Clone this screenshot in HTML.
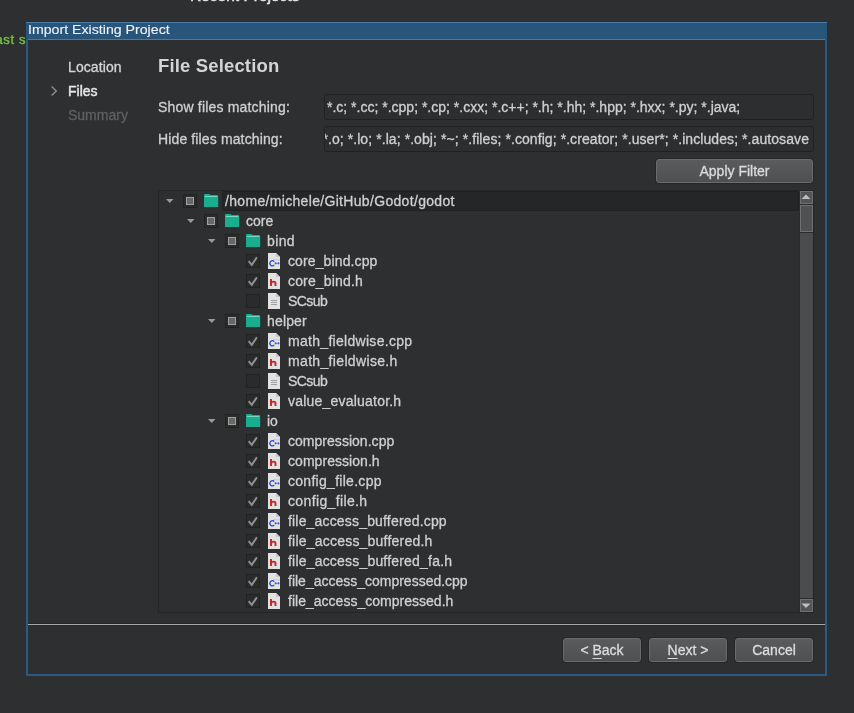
<!DOCTYPE html>
<html><head><meta charset="utf-8">
<style>
*{margin:0;padding:0;box-sizing:border-box}
html,body{width:854px;height:713px;overflow:hidden;background:#2e2f30;font-family:"Liberation Sans",sans-serif;font-size:14px;color:#d0d0d0;-webkit-font-smoothing:antialiased;-webkit-text-stroke:0.3px currentColor}
.a{position:absolute}
.t{position:absolute;white-space:nowrap;line-height:14px;height:14px}
#title{left:26px;top:22px;width:801px;height:18px;background:#28557b;border-top:1px solid #4b7aa3}
#tline{left:28px;top:39px;width:797px;height:1px;background:#4b7aa3}
#bl{left:26px;top:40px;width:2px;height:636px;background:#2a5a85}
#br{left:825px;top:40px;width:2px;height:636px;background:#2a5a85}
#bb{left:26px;top:674px;width:801px;height:2px;background:#2a5a85}
.le{position:absolute;left:324px;width:490px;height:26px;border:1px solid #202121;border-radius:2.5px;background:#2d2e2f;overflow:hidden}
.btn{position:absolute;height:24px;border:1px solid #6a6b6c;border-radius:3px;background:linear-gradient(#5a5b5c,#4f5051);box-shadow:0 0 0 1px #262728;text-align:center;color:#dcdcdc}
.btn span{position:absolute;left:0;right:0;top:4px;line-height:14px}
#tree{left:158px;top:190px;width:656px;height:423px;border:1px solid #242526;background:#2e2f30;overflow:hidden}
.row{position:absolute;left:0;height:20px;width:641px}
.row .txt{position:absolute;top:3px;line-height:14px;white-space:nowrap;color:#d0d0d0}
.tri{position:absolute;top:8px;width:8px;height:5px}
.cb{position:absolute;top:3px;width:14px;height:14px;background:#2a2b2b;border:1px solid #212222}
.cb.p::after{content:"";box-sizing:border-box;position:absolute;left:2px;top:2px;width:8px;height:8px;border:1px solid #a0a0a0;background:#686868}
.fold{position:absolute;top:3px;width:15px;height:14px}
.fic{position:absolute;top:2px;width:13px;height:16px}
#sb{left:641px;top:0;width:14px;height:421px}
u{text-underline-offset:2.5px;text-decoration-thickness:1px}
#wrap{position:absolute;left:0;top:0;width:854px;height:713px;will-change:transform}
</style></head><body><div id="wrap">

<div class="t" style="left:190px;top:-11px;font-size:15.5px;color:#e6e6e6;-webkit-text-stroke:0.5px #e6e6e6">Recent Projects</div>
<div class="t" style="right:828px;top:33px;font-size:13px;letter-spacing:0.6px;color:#76c043;-webkit-text-stroke:0.4px #76c043">ast s</div>

<div class="a" id="title"></div>
<div class="a" id="tline"></div>
<div class="t" style="left:28px;top:23px;font-size:12px;line-height:14px;color:#f2f2f2;-webkit-text-stroke:0.1px #f2f2f2;transform:scaleX(1.18);transform-origin:0 0">Import Existing Project</div>
<div class="a" id="bl"></div><div class="a" id="br"></div><div class="a" id="bb"></div>

<!-- left nav -->
<div class="t" style="left:68px;top:60px;color:#d6d6d6;letter-spacing:0.1px">Location</div>
<svg class="a" style="left:50px;top:85px" width="9" height="12"><path d="M1.6 1.6 L6.3 6.1 L1.6 10.6" stroke="#8c8c8c" stroke-width="1.4" fill="none"/></svg>
<div class="t" style="left:68px;top:84px;color:#e6e6e6;-webkit-text-stroke:0.45px #e6e6e6">Files</div>
<div class="t" style="left:68px;top:108px;color:#5f6061">Summary</div>

<div class="t" style="left:158px;top:57px;font-size:18.5px;line-height:18px;height:18px;font-weight:bold;color:#d4d4d4;-webkit-text-stroke:0;letter-spacing:0.15px">File Selection</div>

<div class="t" style="left:158px;top:100px;letter-spacing:0.18px">Show files matching:</div>
<div class="t" style="left:158px;top:132px;letter-spacing:0.13px">Hide files matching:</div>

<div class="le" style="top:94px"><div class="t" style="left:2px;top:5px">*.c; *.cc; *.cpp; *.cp; *.cxx; *.c++; *.h; *.hh; *.hpp; *.hxx; *.py; *.java;</div></div>
<div class="le" style="top:126px"><div class="t" style="right:4px;top:5px;letter-spacing:0.077px">*.o; *.lo; *.la; *.obj; *~; *.files; *.config; *.creator; *.user*; *.includes; *.autosave</div></div>

<div class="btn" style="left:656px;top:159px;width:157px"><span>Apply Filter</span></div>

<div class="a" id="tree">
<div class="row" style="top:0px"><svg class="tri" style="left:7px" width="8" height="5"><path d="M0 0 H7.5 L3.75 4 Z" fill="#9a9a9a"/></svg><div class="cb p" style="left:24px"></div><svg class="fold" style="left:45px" width="15" height="14" viewBox="0 0 15 14"><path d="M0 1 Q0 0 1 0 H5.5 L6.5 1 H13 Q14.2 1 14.2 2 V13 H0 Z" fill="#1aae90"/><rect x="1" y="2" width="12.2" height="1" fill="#7ad8c0"/></svg><div class="a" style="left:63px;top:0;width:577px;height:20px;background:#252627;border:1px solid #202122;border-radius:2px"></div><div class="txt" style="left:66px;letter-spacing:0.323px">/home/michele/GitHub/Godot/godot</div></div>
<div class="row" style="top:20px"><svg class="tri" style="left:28px" width="8" height="5"><path d="M0 0 H7.5 L3.75 4 Z" fill="#9a9a9a"/></svg><div class="cb p" style="left:45px"></div><svg class="fold" style="left:66px" width="15" height="14" viewBox="0 0 15 14"><path d="M0 1 Q0 0 1 0 H5.5 L6.5 1 H13 Q14.2 1 14.2 2 V13 H0 Z" fill="#1aae90"/><rect x="1" y="2" width="12.2" height="1" fill="#7ad8c0"/></svg><div class="txt" style="left:87px;letter-spacing:0.033px">core</div></div>
<div class="row" style="top:40px"><svg class="tri" style="left:49px" width="8" height="5"><path d="M0 0 H7.5 L3.75 4 Z" fill="#9a9a9a"/></svg><div class="cb p" style="left:66px"></div><svg class="fold" style="left:87px" width="15" height="14" viewBox="0 0 15 14"><path d="M0 1 Q0 0 1 0 H5.5 L6.5 1 H13 Q14.2 1 14.2 2 V13 H0 Z" fill="#1aae90"/><rect x="1" y="2" width="12.2" height="1" fill="#7ad8c0"/></svg><div class="txt" style="left:108px;letter-spacing:0.367px">bind</div></div>
<div class="row" style="top:60px"><div class="cb c" style="left:87px"><svg width="14" height="14" style="position:absolute;left:-1px;top:-1px"><path d="M2.6 7.2 L5.8 10.8 L10.9 3.2" stroke="#909090" stroke-width="2" fill="none"/></svg></div><svg class="fic" style="left:109px" width="13" height="16" viewBox="0 0 13 16"><path d="M0 0 H8 L12 4 V16 H0 Z" fill="#e2e2e2"/><path d="M8 0 V4 H12 Z" fill="#c8c8c8"/><rect x="5" y="6" width="7" height="1.5" fill="#cfcfcf"/><path d="M6.2 8.6 A2.4 2.6 0 1 0 6.2 12" stroke="#2f47dc" stroke-width="1.3" fill="none"/><path d="M6.5 10.3 H8.9 M7.7 9.1 V11.5 M9.2 10.3 H11.6 M10.4 9.1 V11.5" stroke="#2f47dc" stroke-width="0.8" fill="none"/></svg><div class="txt" style="left:129px;letter-spacing:0.117px">core_bind.cpp</div></div>
<div class="row" style="top:80px"><div class="cb c" style="left:87px"><svg width="14" height="14" style="position:absolute;left:-1px;top:-1px"><path d="M2.6 7.2 L5.8 10.8 L10.9 3.2" stroke="#909090" stroke-width="2" fill="none"/></svg></div><svg class="fic" style="left:109px" width="13" height="16" viewBox="0 0 13 16"><path d="M0 0 H8 L12 4 V16 H0 Z" fill="#e2e2e2"/><path d="M8 0 V4 H12 Z" fill="#c8c8c8"/><path d="M3 6 V13 M3 10.2 Q3.5 8.6 5.6 8.6 Q7.5 8.6 7.5 10.5 V13" stroke="#c82424" stroke-width="1.9" fill="none"/></svg><div class="txt" style="left:129px;letter-spacing:0.160px">core_bind.h</div></div>
<div class="row" style="top:100px"><div class="cb u" style="left:87px"></div><svg class="fic" style="left:109px" width="13" height="16" viewBox="0 0 13 16"><path d="M0 0 H8 L12 4 V16 H0 Z" fill="#e2e2e2"/><path d="M8 0 V4 H12 Z" fill="#c8c8c8"/><rect x="3" y="7" width="6" height="1" fill="#a0a0a0"/><rect x="3" y="9" width="6" height="1" fill="#a0a0a0"/><rect x="3" y="11" width="6" height="1" fill="#a0a0a0"/></svg><div class="txt" style="left:129px;letter-spacing:-0.550px">SCsub</div></div>
<div class="row" style="top:120px"><svg class="tri" style="left:49px" width="8" height="5"><path d="M0 0 H7.5 L3.75 4 Z" fill="#9a9a9a"/></svg><div class="cb p" style="left:66px"></div><svg class="fold" style="left:87px" width="15" height="14" viewBox="0 0 15 14"><path d="M0 1 Q0 0 1 0 H5.5 L6.5 1 H13 Q14.2 1 14.2 2 V13 H0 Z" fill="#1aae90"/><rect x="1" y="2" width="12.2" height="1" fill="#7ad8c0"/></svg><div class="txt" style="left:108px;letter-spacing:0.160px">helper</div></div>
<div class="row" style="top:140px"><div class="cb c" style="left:87px"><svg width="14" height="14" style="position:absolute;left:-1px;top:-1px"><path d="M2.6 7.2 L5.8 10.8 L10.9 3.2" stroke="#909090" stroke-width="2" fill="none"/></svg></div><svg class="fic" style="left:109px" width="13" height="16" viewBox="0 0 13 16"><path d="M0 0 H8 L12 4 V16 H0 Z" fill="#e2e2e2"/><path d="M8 0 V4 H12 Z" fill="#c8c8c8"/><rect x="5" y="6" width="7" height="1.5" fill="#cfcfcf"/><path d="M6.2 8.6 A2.4 2.6 0 1 0 6.2 12" stroke="#2f47dc" stroke-width="1.3" fill="none"/><path d="M6.5 10.3 H8.9 M7.7 9.1 V11.5 M9.2 10.3 H11.6 M10.4 9.1 V11.5" stroke="#2f47dc" stroke-width="0.8" fill="none"/></svg><div class="txt" style="left:129px;letter-spacing:0.294px">math_fieldwise.cpp</div></div>
<div class="row" style="top:160px"><div class="cb c" style="left:87px"><svg width="14" height="14" style="position:absolute;left:-1px;top:-1px"><path d="M2.6 7.2 L5.8 10.8 L10.9 3.2" stroke="#909090" stroke-width="2" fill="none"/></svg></div><svg class="fic" style="left:109px" width="13" height="16" viewBox="0 0 13 16"><path d="M0 0 H8 L12 4 V16 H0 Z" fill="#e2e2e2"/><path d="M8 0 V4 H12 Z" fill="#c8c8c8"/><path d="M3 6 V13 M3 10.2 Q3.5 8.6 5.6 8.6 Q7.5 8.6 7.5 10.5 V13" stroke="#c82424" stroke-width="1.9" fill="none"/></svg><div class="txt" style="left:129px;letter-spacing:0.340px">math_fieldwise.h</div></div>
<div class="row" style="top:180px"><div class="cb u" style="left:87px"></div><svg class="fic" style="left:109px" width="13" height="16" viewBox="0 0 13 16"><path d="M0 0 H8 L12 4 V16 H0 Z" fill="#e2e2e2"/><path d="M8 0 V4 H12 Z" fill="#c8c8c8"/><rect x="3" y="7" width="6" height="1" fill="#a0a0a0"/><rect x="3" y="9" width="6" height="1" fill="#a0a0a0"/><rect x="3" y="11" width="6" height="1" fill="#a0a0a0"/></svg><div class="txt" style="left:129px;letter-spacing:-0.550px">SCsub</div></div>
<div class="row" style="top:200px"><div class="cb c" style="left:87px"><svg width="14" height="14" style="position:absolute;left:-1px;top:-1px"><path d="M2.6 7.2 L5.8 10.8 L10.9 3.2" stroke="#909090" stroke-width="2" fill="none"/></svg></div><svg class="fic" style="left:109px" width="13" height="16" viewBox="0 0 13 16"><path d="M0 0 H8 L12 4 V16 H0 Z" fill="#e2e2e2"/><path d="M8 0 V4 H12 Z" fill="#c8c8c8"/><path d="M3 6 V13 M3 10.2 Q3.5 8.6 5.6 8.6 Q7.5 8.6 7.5 10.5 V13" stroke="#c82424" stroke-width="1.9" fill="none"/></svg><div class="txt" style="left:129px;letter-spacing:0.212px">value_evaluator.h</div></div>
<div class="row" style="top:220px"><svg class="tri" style="left:49px" width="8" height="5"><path d="M0 0 H7.5 L3.75 4 Z" fill="#9a9a9a"/></svg><div class="cb p" style="left:66px"></div><svg class="fold" style="left:87px" width="15" height="14" viewBox="0 0 15 14"><path d="M0 1 Q0 0 1 0 H5.5 L6.5 1 H13 Q14.2 1 14.2 2 V13 H0 Z" fill="#1aae90"/><rect x="1" y="2" width="12.2" height="1" fill="#7ad8c0"/></svg><div class="txt" style="left:108px;letter-spacing:0.000px">io</div></div>
<div class="row" style="top:240px"><div class="cb c" style="left:87px"><svg width="14" height="14" style="position:absolute;left:-1px;top:-1px"><path d="M2.6 7.2 L5.8 10.8 L10.9 3.2" stroke="#909090" stroke-width="2" fill="none"/></svg></div><svg class="fic" style="left:109px" width="13" height="16" viewBox="0 0 13 16"><path d="M0 0 H8 L12 4 V16 H0 Z" fill="#e2e2e2"/><path d="M8 0 V4 H12 Z" fill="#c8c8c8"/><rect x="5" y="6" width="7" height="1.5" fill="#cfcfcf"/><path d="M6.2 8.6 A2.4 2.6 0 1 0 6.2 12" stroke="#2f47dc" stroke-width="1.3" fill="none"/><path d="M6.5 10.3 H8.9 M7.7 9.1 V11.5 M9.2 10.3 H11.6 M10.4 9.1 V11.5" stroke="#2f47dc" stroke-width="0.8" fill="none"/></svg><div class="txt" style="left:129px;letter-spacing:0.029px">compression.cpp</div></div>
<div class="row" style="top:260px"><div class="cb c" style="left:87px"><svg width="14" height="14" style="position:absolute;left:-1px;top:-1px"><path d="M2.6 7.2 L5.8 10.8 L10.9 3.2" stroke="#909090" stroke-width="2" fill="none"/></svg></div><svg class="fic" style="left:109px" width="13" height="16" viewBox="0 0 13 16"><path d="M0 0 H8 L12 4 V16 H0 Z" fill="#e2e2e2"/><path d="M8 0 V4 H12 Z" fill="#c8c8c8"/><path d="M3 6 V13 M3 10.2 Q3.5 8.6 5.6 8.6 Q7.5 8.6 7.5 10.5 V13" stroke="#c82424" stroke-width="1.9" fill="none"/></svg><div class="txt" style="left:129px;letter-spacing:0.050px">compression.h</div></div>
<div class="row" style="top:280px"><div class="cb c" style="left:87px"><svg width="14" height="14" style="position:absolute;left:-1px;top:-1px"><path d="M2.6 7.2 L5.8 10.8 L10.9 3.2" stroke="#909090" stroke-width="2" fill="none"/></svg></div><svg class="fic" style="left:109px" width="13" height="16" viewBox="0 0 13 16"><path d="M0 0 H8 L12 4 V16 H0 Z" fill="#e2e2e2"/><path d="M8 0 V4 H12 Z" fill="#c8c8c8"/><rect x="5" y="6" width="7" height="1.5" fill="#cfcfcf"/><path d="M6.2 8.6 A2.4 2.6 0 1 0 6.2 12" stroke="#2f47dc" stroke-width="1.3" fill="none"/><path d="M6.5 10.3 H8.9 M7.7 9.1 V11.5 M9.2 10.3 H11.6 M10.4 9.1 V11.5" stroke="#2f47dc" stroke-width="0.8" fill="none"/></svg><div class="txt" style="left:129px;letter-spacing:0.286px">config_file.cpp</div></div>
<div class="row" style="top:300px"><div class="cb c" style="left:87px"><svg width="14" height="14" style="position:absolute;left:-1px;top:-1px"><path d="M2.6 7.2 L5.8 10.8 L10.9 3.2" stroke="#909090" stroke-width="2" fill="none"/></svg></div><svg class="fic" style="left:109px" width="13" height="16" viewBox="0 0 13 16"><path d="M0 0 H8 L12 4 V16 H0 Z" fill="#e2e2e2"/><path d="M8 0 V4 H12 Z" fill="#c8c8c8"/><path d="M3 6 V13 M3 10.2 Q3.5 8.6 5.6 8.6 Q7.5 8.6 7.5 10.5 V13" stroke="#c82424" stroke-width="1.9" fill="none"/></svg><div class="txt" style="left:129px;letter-spacing:0.367px">config_file.h</div></div>
<div class="row" style="top:320px"><div class="cb c" style="left:87px"><svg width="14" height="14" style="position:absolute;left:-1px;top:-1px"><path d="M2.6 7.2 L5.8 10.8 L10.9 3.2" stroke="#909090" stroke-width="2" fill="none"/></svg></div><svg class="fic" style="left:109px" width="13" height="16" viewBox="0 0 13 16"><path d="M0 0 H8 L12 4 V16 H0 Z" fill="#e2e2e2"/><path d="M8 0 V4 H12 Z" fill="#c8c8c8"/><rect x="5" y="6" width="7" height="1.5" fill="#cfcfcf"/><path d="M6.2 8.6 A2.4 2.6 0 1 0 6.2 12" stroke="#2f47dc" stroke-width="1.3" fill="none"/><path d="M6.5 10.3 H8.9 M7.7 9.1 V11.5 M9.2 10.3 H11.6 M10.4 9.1 V11.5" stroke="#2f47dc" stroke-width="0.8" fill="none"/></svg><div class="txt" style="left:129px;letter-spacing:0.174px">file_access_buffered.cpp</div></div>
<div class="row" style="top:340px"><div class="cb c" style="left:87px"><svg width="14" height="14" style="position:absolute;left:-1px;top:-1px"><path d="M2.6 7.2 L5.8 10.8 L10.9 3.2" stroke="#909090" stroke-width="2" fill="none"/></svg></div><svg class="fic" style="left:109px" width="13" height="16" viewBox="0 0 13 16"><path d="M0 0 H8 L12 4 V16 H0 Z" fill="#e2e2e2"/><path d="M8 0 V4 H12 Z" fill="#c8c8c8"/><path d="M3 6 V13 M3 10.2 Q3.5 8.6 5.6 8.6 Q7.5 8.6 7.5 10.5 V13" stroke="#c82424" stroke-width="1.9" fill="none"/></svg><div class="txt" style="left:129px;letter-spacing:0.214px">file_access_buffered.h</div></div>
<div class="row" style="top:360px"><div class="cb c" style="left:87px"><svg width="14" height="14" style="position:absolute;left:-1px;top:-1px"><path d="M2.6 7.2 L5.8 10.8 L10.9 3.2" stroke="#909090" stroke-width="2" fill="none"/></svg></div><svg class="fic" style="left:109px" width="13" height="16" viewBox="0 0 13 16"><path d="M0 0 H8 L12 4 V16 H0 Z" fill="#e2e2e2"/><path d="M8 0 V4 H12 Z" fill="#c8c8c8"/><path d="M3 6 V13 M3 10.2 Q3.5 8.6 5.6 8.6 Q7.5 8.6 7.5 10.5 V13" stroke="#c82424" stroke-width="1.9" fill="none"/></svg><div class="txt" style="left:129px;letter-spacing:0.196px">file_access_buffered_fa.h</div></div>
<div class="row" style="top:380px"><div class="cb c" style="left:87px"><svg width="14" height="14" style="position:absolute;left:-1px;top:-1px"><path d="M2.6 7.2 L5.8 10.8 L10.9 3.2" stroke="#909090" stroke-width="2" fill="none"/></svg></div><svg class="fic" style="left:109px" width="13" height="16" viewBox="0 0 13 16"><path d="M0 0 H8 L12 4 V16 H0 Z" fill="#e2e2e2"/><path d="M8 0 V4 H12 Z" fill="#c8c8c8"/><rect x="5" y="6" width="7" height="1.5" fill="#cfcfcf"/><path d="M6.2 8.6 A2.4 2.6 0 1 0 6.2 12" stroke="#2f47dc" stroke-width="1.3" fill="none"/><path d="M6.5 10.3 H8.9 M7.7 9.1 V11.5 M9.2 10.3 H11.6 M10.4 9.1 V11.5" stroke="#2f47dc" stroke-width="0.8" fill="none"/></svg><div class="txt" style="left:129px;letter-spacing:-0.004px">file_access_compressed.cpp</div></div>
<div class="row" style="top:400px"><div class="cb c" style="left:87px"><svg width="14" height="14" style="position:absolute;left:-1px;top:-1px"><path d="M2.6 7.2 L5.8 10.8 L10.9 3.2" stroke="#909090" stroke-width="2" fill="none"/></svg></div><svg class="fic" style="left:109px" width="13" height="16" viewBox="0 0 13 16"><path d="M0 0 H8 L12 4 V16 H0 Z" fill="#e2e2e2"/><path d="M8 0 V4 H12 Z" fill="#c8c8c8"/><path d="M3 6 V13 M3 10.2 Q3.5 8.6 5.6 8.6 Q7.5 8.6 7.5 10.5 V13" stroke="#c82424" stroke-width="1.9" fill="none"/></svg><div class="txt" style="left:129px;letter-spacing:0.017px">file_access_compressed.h</div></div>
<div class="a" style="left:640px;top:0;width:1px;height:421px;background:#2a2b2c"></div>
<div class="a" style="left:641px;top:0;width:13px;height:13px;background:#535455;border:1px solid #6f7071"><svg class="a" style="left:0px;top:2px" width="10" height="6"><path d="M0.5 5 L5 0.5 L9.5 5 Z" fill="#bdbdbd"/></svg></div>
<div class="a" style="left:641px;top:13px;width:13px;height:1px;background:#2a2b2c"></div>
<div class="a" style="left:641px;top:14px;width:13px;height:27px;background:#505152;border:1px solid #6f7071"></div>
<div class="a" style="left:641px;top:41px;width:13px;height:1px;background:#2a2b2c"></div>
<div class="a" style="left:641px;top:42px;width:13px;height:365px;background:#4b4c4d"></div>
<div class="a" style="left:641px;top:407px;width:13px;height:1px;background:#2a2b2c"></div>
<div class="a" style="left:641px;top:408px;width:13px;height:13px;background:#535455;border:1px solid #6f7071"><svg class="a" style="left:0px;top:3px" width="10" height="6"><path d="M0.5 0.5 L9.5 0.5 L5 5 Z" fill="#bdbdbd"/></svg></div>
</div>

<div class="a" style="left:28px;top:623px;width:797px;height:1px;background:#27282a"></div>
<div class="a" style="left:28px;top:624px;width:797px;height:1px;background:#a9a9a9"></div>
<div class="a" style="left:28px;top:625px;width:797px;height:1px;background:#27282a"></div>

<div class="btn" style="left:563px;top:638px;width:78px"><span>&lt; <u>B</u>ack</span></div>
<div class="btn" style="left:649px;top:638px;width:78px"><span><u>N</u>ext &gt;</span></div>
<div class="btn" style="left:735px;top:638px;width:78px"><span>Cancel</span></div>

</div></body></html>
